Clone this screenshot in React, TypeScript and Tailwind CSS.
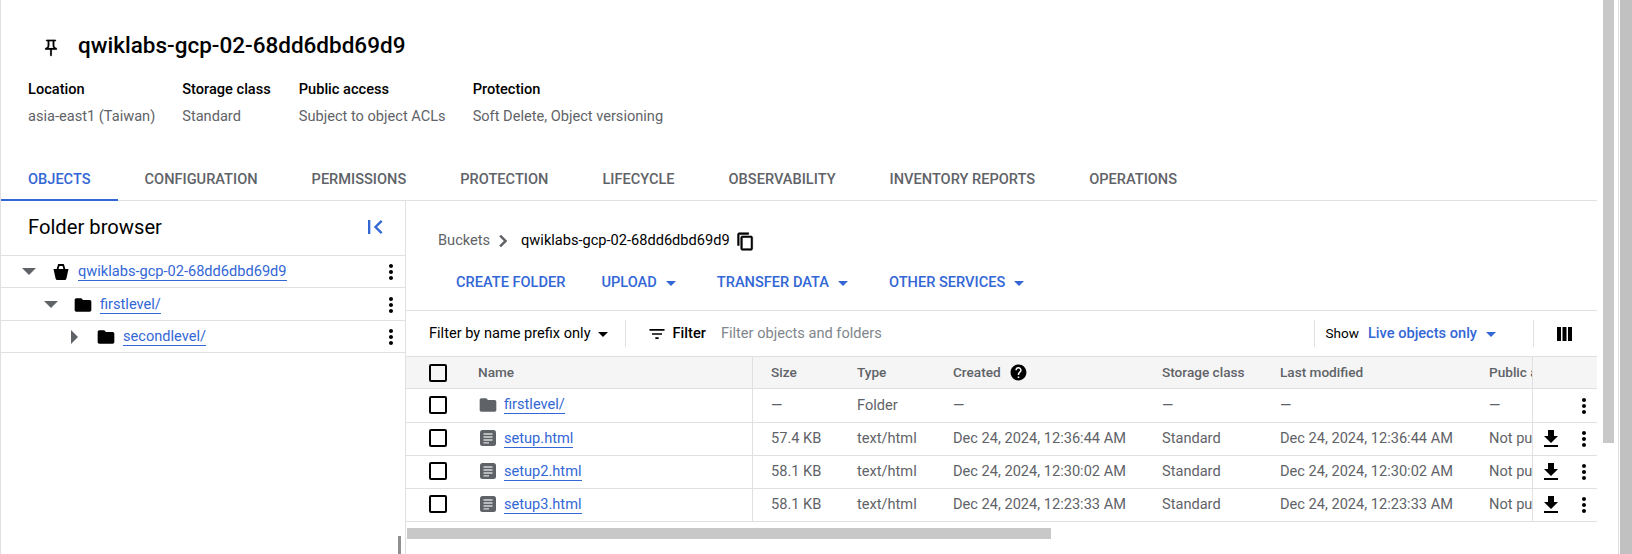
import {
    MdArrowDropDown,
    MdDownload,
    MdFilterList,
    MdFirstPage,
    MdFolder,
    MdHelp,
    MdMoreVert,
} from 'react-icons/md'

const tabs = [
    'OBJECTS',
    'CONFIGURATION',
    'PERMISSIONS',
    'PROTECTION',
    'LIFECYCLE',
    'OBSERVABILITY',
    'INVENTORY REPORTS',
    'OPERATIONS',
]

const meta = [
    { label: 'Location', value: 'asia-east1 (Taiwan)' },
    { label: 'Storage class', value: 'Standard', extra: 'mr-px' },
    { label: 'Public access', value: 'Subject to object ACLs' },
    { label: 'Protection', value: 'Soft Delete, Object versioning' },
]

const files = [
    { name: 'setup.html', size: '57.4 KB', date: 'Dec 24, 2024, 12:36:44 AM' },
    { name: 'setup2.html', size: '58.1 KB', date: 'Dec 24, 2024, 12:30:02 AM' },
    { name: 'setup3.html', size: '58.1 KB', date: 'Dec 24, 2024, 12:23:33 AM' },
]

const rowGrid =
    'grid grid-cols-[56px_291px_88px_96px_209px_118px_209px_59px_65px] items-stretch border-b border-[#e0e0e0]'

function Cell({ children, className = '' }: { children?: React.ReactNode; className?: string }) {
    return <div className={`flex items-center pl-4 overflow-hidden whitespace-nowrap ${className}`}>{children}</div>
}

function Checkbox({ className = '' }: { className?: string }) {
    return (
        <div className={`flex items-center pl-[23px] ${className}`}>
            <div className="w-[18px] h-[18px] border-2 border-black rounded-[2px]" />
        </div>
    )
}

function LinkText({ children }: { children: React.ReactNode }) {
    return <span className="text-[#3367d6] border-b border-[#3367d6] leading-[18px]">{children}</span>
}

function PinIcon() {
    return (
        <svg width="20" height="20" viewBox="0 0 24 24" fill="#000" stroke="#000" strokeWidth="0.200" className="ml-[40px] mt-[9px] shrink-0">
            <path d="M14 4v5c0 1.120.370 2.160 1 3H9c.650-.860 1-1.900 1-3V4h4m3-2H7c-.550 0-1 .450-1 1s.450 1 1 1h1v5c0 1.660-1.340 3-3 3v2h5.970v7l1 1 1-1v-7H19v-2c-1.660 0-3-1.340-3-3V4h1c.550 0 1-.450 1-1s-.450-1-1-1z" />
        </svg>
    )
}

function CopyIcon() {
    return (
        <svg width="19" height="19" viewBox="0 0 24 24" fill="#000" stroke="#000" strokeWidth="0.700" className="ml-[6px] shrink-0">
            <path d="M16 1H4c-1.100 0-2 .900-2 2v14h2V3h12V1zm3 4H8c-1.100 0-2 .900-2 2v14c0 1.100.900 2 2 2h11c1.100 0 2-.900 2-2V7c0-1.100-.900-2-2-2zm0 16H8V7h11v14z" />
        </svg>
    )
}

function ChevronIcon() {
    return (
        <svg width="24" height="24" viewBox="0 0 24 24" fill="#5f6368" stroke="#5f6368" strokeWidth="0.600" className="ml-[1px] mr-[6px] shrink-0">
            <path d="M10 6 8.590 7.410 13.170 12l-4.580 4.590L10 18l6-6z" />
        </svg>
    )
}

function BucketIcon() {
    return (
        <svg width="16" height="16" viewBox="0 0 16 16" fill="#000" className="shrink-0">
            <path d="M0.500 5H15.500L13.400 14.500C13.200 15.400 12.600 16 11.800 16H4.200C3.400 16 2.800 15.400 2.600 14.500Z" />
            <path d="M4.500 5.500 5.800 1H10.200L11.500 5.500" fill="none" stroke="#000" strokeWidth="1.800" />
        </svg>
    )
}

function FileIcon() {
    return (
        <svg width="16" height="16" viewBox="0 0 16 16" className="shrink-0 ml-[2px] mr-[8px]">
            <rect x="0" y="0" width="16" height="16" rx="2.500" fill="#5f6368" />
            <path d="M3.500 4H12.500M3.500 7H12.500M3.500 10H12.500M3.500 12.800H9" stroke="#d8d8d8" strokeWidth="1.300" />
        </svg>
    )
}

function ColumnsIcon() {
    return (
        <svg width="15" height="14" viewBox="0 0 15 14" fill="#000" className="shrink-0">
            <rect x="0" y="0" width="4" height="14" />
            <rect x="5.500" y="0" width="4" height="14" />
            <rect x="11" y="0" width="4" height="14" />
        </svg>
    )
}

function TreeRow({ caretClass, icon, label, open, className = '' }: { caretClass: string; icon: React.ReactNode; label: string; open: boolean; className?: string }) {
    return (
        <div className={`h-[32.400px] border-b border-[#e0e0e0] flex items-center ${className}`}>
            <div className={`flex items-center ${caretClass}`}>
                {open ? (
                    <div className="w-0 h-0 border-l-[7px] border-r-[7px] border-t-[7px] border-l-transparent border-r-transparent border-t-[#5f6368]" />
                ) : (
                    <div className="w-0 h-0 border-t-[7px] border-b-[7px] border-l-[7px] border-t-transparent border-b-transparent border-l-[#5f6368]" />
                )}
            </div>
            {icon}
            <div className="ml-[9px] flex-1">
                <LinkText>{label}</LinkText>
            </div>
            <MdMoreVert className="text-black mr-[2px]" size={24} />
        </div>
    )
}

function Action({ label, className = '' }: { label: string; className?: string }) {
    return (
        <div className={`flex items-center font-medium text-[#3367d6] ${className}`}>
            {label}
            <MdArrowDropDown size={24} className="ml-[2px]" />
        </div>
    )
}

export default function App() {
    return (
        <div className="h-[554px] w-[1632px] overflow-hidden flex bg-white text-black text-[14.600px] font-['Roboto',sans-serif]">
            <main className="w-[1597px] shrink-0 border-l border-[#e0e0e0] flex flex-col">
                <header className="h-[159px] shrink-0">
                    <div className="h-[90px] pt-[29px] flex items-start">
                        <PinIcon />
                        <h1 className="ml-[17px] text-[22.500px] leading-8 font-medium">qwiklabs-gcp-02-68dd6dbd69d9</h1>
                    </div>
                    <div className="flex pl-[27px] gap-x-[27px]">
                        {meta.map((item) => (
                            <div key={item.label} className={item.extra}>
                                <div className="font-medium h-[20px] leading-[20px] -mt-[11px]">{item.label}</div>
                                <div className="text-[#5f6368] mt-[7px] leading-[20px]">{item.value}</div>
                            </div>
                        ))}
                    </div>
                </header>
                <nav className="h-[42px] shrink-0 flex border-b border-[#e0e0e0]">
                    {tabs.map((tab, i) => (
                        <div
                            key={tab}
                            className={`px-[27px] pt-[2px] flex items-center font-medium -mb-px border-b-2 ${
                                i === 0 ? 'text-[#3367d6] border-[#3367d6]' : 'text-[#5f6368] border-transparent'
                            }`}
                        >
                            {tab}
                        </div>
                    ))}
                </nav>
                <div className="flex-1 flex min-h-0">
                    <aside className="w-[405px] shrink-0 border-r border-[#e0e0e0] flex flex-col">
                        <div className="h-[55px] shrink-0 border-b border-[#e0e0e0] flex items-center justify-between pl-[27px] pr-[16px]">
                            <span className="text-[20.200px] -mt-[2px]">Folder browser</span>
                            <MdFirstPage size={28} className="text-[#3367d6] -mt-[2px]" />
                        </div>
                        <TreeRow caretClass="ml-[21px] mr-[17px]" open icon={<BucketIcon />} label="qwiklabs-gcp-02-68dd6dbd69d9" />
                        <TreeRow caretClass="ml-[43px] mr-[17px]" className="pt-px" open icon={<MdFolder size={20} className="-mx-[2px]" />} label="firstlevel/" />
                        <TreeRow caretClass="ml-[70px] mr-[20px]" className="pt-px" open={false} icon={<MdFolder size={20} className="-mx-[2px]" />} label="secondlevel/" />
                        <div className="mt-auto self-end mr-[4px] w-[3px] h-[18px] bg-[#8d8f91]" />
                    </aside>
                    <section className="flex-1 flex flex-col min-w-0">
                        <div className="h-[110px] shrink-0 border-b border-[#e0e0e0]">
                            <div className="h-[78px] pl-[32px] pt-[28px] flex items-start">
                                <div className="flex items-center h-6">
                                    <span className="text-[#5f6368]">Buckets</span>
                                    <ChevronIcon />
                                    <span>qwiklabs-gcp-02-68dd6dbd69d9</span>
                                    <CopyIcon />
                                </div>
                            </div>
                            <div className="flex items-center pl-[50px] -mt-[8px] h-6">
                                <div className="font-medium text-[#3367d6]">CREATE FOLDER</div>
                                <Action label="UPLOAD" className="ml-[36px]" />
                                <Action label="TRANSFER DATA" className="ml-[34px]" />
                                <Action label="OTHER SERVICES" className="ml-[34px]" />
                            </div>
                        </div>
                        <div className="h-[45px] shrink-0 flex items-center pl-[23px]">
                            <span>Filter by name prefix only</span>
                            <MdArrowDropDown size={24} />
                            <div className="w-px h-[27px] bg-[#e0e0e0] ml-[10px]" />
                            <MdFilterList size={20} className="ml-[21px]" />
                            <span className="font-medium ml-[6px]">Filter</span>
                            <span className="text-[#80868b] ml-[15px]">Filter objects and folders</span>
                            <div className="ml-auto flex items-center">
                                <div className="w-px h-[27px] bg-[#e0e0e0]" />
                                <span className="ml-[10px] text-[13.600px]">Show</span>
                                <span className="text-[#3367d6] font-medium ml-[9px]">Live objects only</span>
                                <MdArrowDropDown size={24} className="text-[#3367d6] ml-[2px]" />
                                <div className="w-px h-[27px] bg-[#e0e0e0] ml-[30px]" />
                                <div className="ml-[23px] mr-[25px]">
                                    <ColumnsIcon />
                                </div>
                            </div>
                        </div>
                        <div className={`${rowGrid} h-[33px] bg-[#f5f5f5] border-t border-t-[#e0e0e0] font-medium text-[#5f6368] text-[13.600px]`}>
                            <Checkbox />
                            <Cell className="border-r border-[#e0e0e0]">Name</Cell>
                            <Cell className="pl-[18px]">Size</Cell>
                            <Cell>Type</Cell>
                            <Cell>
                                Created
                                <MdHelp size={19} className="ml-[8px] text-black" />
                            </Cell>
                            <Cell>Storage class</Cell>
                            <Cell>Last modified</Cell>
                            <Cell>Public access</Cell>
                            <div className="border-l border-[#e0e0e0]" />
                        </div>
                        <div className={`${rowGrid} h-[34px] text-[#5f6368]`}>
                            <Checkbox className="pb-[2px]" />
                            <Cell className="border-r border-[#e0e0e0] pb-[2px]">
                                <MdFolder size={20} className="text-[#5f6368] mr-[6px] shrink-0" />
                                <LinkText>firstlevel/</LinkText>
                            </Cell>
                            <Cell className="pl-[18px]">—</Cell>
                            <Cell>Folder</Cell>
                            <Cell>—</Cell>
                            <Cell>—</Cell>
                            <Cell>—</Cell>
                            <Cell>—</Cell>
                            <div className="border-l border-[#e0e0e0] flex items-center justify-end pr-[1px]">
                                <MdMoreVert size={24} className="text-black" />
                            </div>
                        </div>
                        {files.map((file) => (
                            <div key={file.name} className={`${rowGrid} h-[33px] text-[#5f6368]`}>
                                <Checkbox className="pb-[2px]" />
                                <Cell className="border-r border-[#e0e0e0] pb-[2px]">
                                    <FileIcon />
                                    <LinkText>{file.name}</LinkText>
                                </Cell>
                                <Cell className="pl-[18px]">{file.size}</Cell>
                                <Cell>text/html</Cell>
                                <Cell>{file.date}</Cell>
                                <Cell>Standard</Cell>
                                <Cell>{file.date}</Cell>
                                <Cell>Not public</Cell>
                                <div className="border-l border-[#e0e0e0] flex items-center justify-end pr-[1px] text-black">
                                    <MdDownload size={24} className="mr-[9px]" />
                                    <MdMoreVert size={24} />
                                </div>
                            </div>
                        ))}
                        <div className="mt-[6px] ml-[1px] w-[644px] h-[11px] bg-[#c8c8c8]" />
                    </section>
                </div>
            </main>
            <div className="ml-[6px] w-[11px] h-[443px] bg-[#c8c8c8] shrink-0" />
            <div className="ml-[4px] w-px bg-[#dddddd] shrink-0" />
            <div className="ml-[1px] w-[12px] bg-[#c1c1c1] shrink-0" />
        </div>
    )
}
